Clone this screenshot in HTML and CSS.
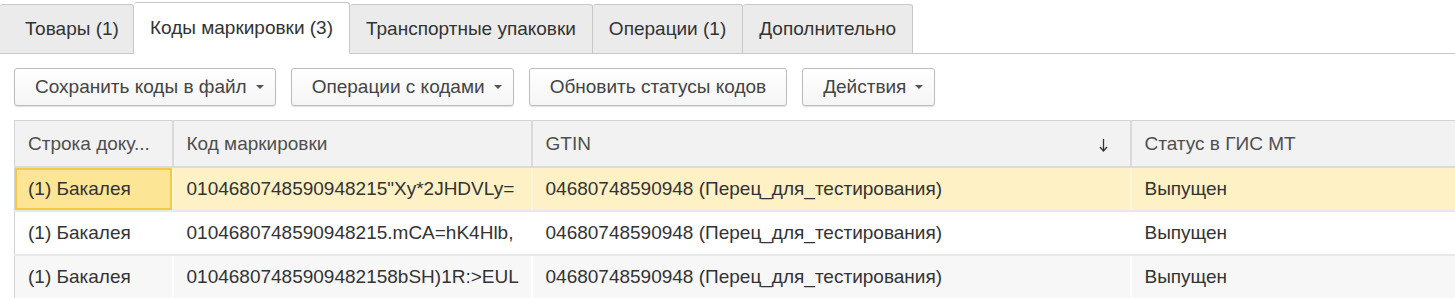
FILE: index.html
```html
<!DOCTYPE html>
<html lang="ru">
<head>
<meta charset="UTF-8" />
<title>Коды маркировки</title>
<link rel="stylesheet" href="styles.css">
</head>
<body>

<div class="tabs">
  <div class="tab first">Товары (1)</div>
  <div class="tab active">Коды маркировки (3)</div>
  <div class="tab">Транспортные упаковки</div>
  <div class="tab">Операции (1)</div>
  <div class="tab">Дополнительно</div>
  <div class="tab-rest"></div>
</div>

<div class="toolbar">
  <button class="btn">Сохранить коды в файл <span class="caret"></span></button>
  <button class="btn">Операции с кодами <span class="caret"></span></button>
  <button class="btn">Обновить статусы кодов</button>
  <button class="btn">Действия <span class="caret"></span></button>
</div>

<table class="grid">
  <colgroup>
    <col class="c-row">
    <col class="c-code">
    <col class="c-gtin">
    <col class="c-status">
  </colgroup>
  <thead>
    <tr>
      <th>Строка доку...</th>
      <th>Код маркировки</th>
      <th class="sorted">GTIN
        <svg class="sort" width="9" height="14" viewBox="0 0 9 14">
          <path d="M4.5 1 V12.5" stroke="#333" stroke-width="1.3" fill="none"/>
          <path d="M1 9 L4.5 13 L8 9" stroke="#333" stroke-width="1.3" fill="none"/>
        </svg>
      </th>
      <th>Статус в ГИС МТ</th>
    </tr>
  </thead>
  <tbody>
    <tr class="current">
      <td class="focus">(1) Бакалея</td>
      <td>0104680748590948215"Xy*2JHDVLy=</td>
      <td>04680748590948 (Перец_для_тестирования)</td>
      <td>Выпущен</td>
    </tr>
    <tr>
      <td>(1) Бакалея</td>
      <td>0104680748590948215.mCA=hK4Hlb,</td>
      <td>04680748590948 (Перец_для_тестирования)</td>
      <td>Выпущен</td>
    </tr>
    <tr class="alt">
      <td>(1) Бакалея</td>
      <td>01046807485909482158bSH)1R:&gt;EUL</td>
      <td>04680748590948 (Перец_для_тестирования)</td>
      <td>Выпущен</td>
    </tr>
  </tbody>
</table>

</body>
</html>
```

FILE: styles.css
```css
/* base */
body {
  margin: 0;
  background: #fff;
  font-family: "Liberation Sans", Arial, sans-serif;
  font-size: 19px;
  color: #333;
  overflow: hidden;
}

/* tabs */
.tabs {
  display: flex;
  align-items: flex-end;
  height: 54px;
  padding-top: 2px;
  box-sizing: border-box;
}
.tab {
  height: 50px;
  box-sizing: border-box;
  padding: 0 16px;
  display: flex;
  align-items: center;
  background: #ebebeb;
  border: 1px solid #c8c8c8;
  border-left: none;
  border-radius: 3px 3px 0 0;
  color: #333;
  white-space: nowrap;
}
.tab.first {
  padding-left: 25px;
  width: 134px;
}
.tab.active {
  height: 52px;
  background: #fff;
  border-bottom-color: #fff;
}
.tab-rest {
  flex: 1;
  border-bottom: 1px solid #c8c8c8;
}

/* toolbar */
.toolbar {
  display: flex;
  gap: 15px;
  padding: 14px 14px 0;
  height: 38px;
}
.btn {
  height: 38px;
  padding: 0 20px;
  border: 1px solid #bcbcbc;
  border-radius: 3px;
  background: linear-gradient(#fff, #f5f5f5);
  box-shadow: 0 1px 1px rgba(0,0,0,0.12);
  font-family: inherit;
  font-size: 19px;
  color: #444;
  display: flex;
  align-items: center;
  gap: 9px;
}
.btn:has(.caret) {
  padding-right: 11px;
}
.caret {
  width: 0;
  height: 0;
  border-left: 4px solid transparent;
  border-right: 4px solid transparent;
  border-top: 4px solid #555;
}

/* grid */
.grid {
  margin: 14px 0 0 14px;
  border-collapse: collapse;
  table-layout: fixed;
  width: 1460px;
  border: 1px solid #d4d4d4;
}
.c-row { width: 158px; }
.c-code { width: 359px; }
.c-gtin { width: 599px; }
.c-status { width: 344px; }

.grid th {
  height: 45px;
  background: #f2f2f2;
  border: 1px solid #dadada;
  border-width: 0 2px 2px 0;
  text-align: left;
  font-weight: normal;
  color: #4f4f4f;
  padding: 0 13px;
  white-space: nowrap;
}
.grid th.sorted {
  position: relative;
}
.sort {
  position: absolute;
  right: 22px;
  top: 17px;
}
.grid td {
  height: 42px;
  padding: 0 13px;
  border-bottom: 2px solid #e8e8e8;
  border-right: 2px solid transparent;
  white-space: nowrap;
  overflow: hidden;
}
.grid tr.current td {
  background: #fdf1c5;
  border-right-color: #fdf6dd;
}
.grid tr.current td.focus {
  background: #fde596;
  box-shadow: inset 0 0 0 2px #f6c945;
}
.grid tr.alt td {
  background: #f7f7f7;
}
```
